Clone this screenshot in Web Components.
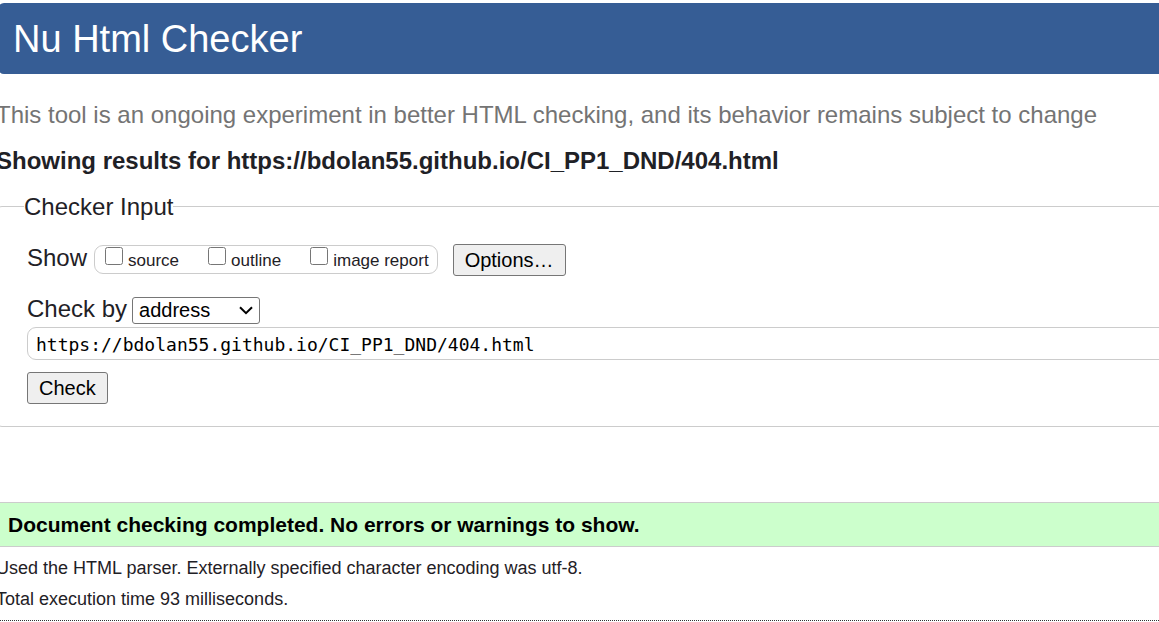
<!DOCTYPE html>
<html lang="en">
<head>
<meta charset="utf-8">
<title>Nu Html Checker</title>
<style>
body { margin: 0; overflow-x: hidden; background: #fff; color: #1f2126; font-family: "Liberation Sans", Arial, sans-serif; }
</style>
</head>
<body>
<checker-page>
  <checker-banner>Nu Html Checker</checker-banner>
  <checker-intro>
    This tool is an ongoing experiment in better HTML checking, and its behavior remains subject to change
    <span slot="results">Showing results for https://bdolan55.github.io/CI_PP1_DND/404.html</span>
  </checker-intro>
  <checker-form></checker-form>
  <checker-results>
    Document checking completed. No errors or warnings to show.
    <span slot="parser">Used the HTML parser. Externally specified character encoding was utf-8.</span>
    <span slot="time">Total execution time 93 milliseconds.</span>
  </checker-results>
</checker-page>

<script>
const define = (name, html) => customElements.define(name, class extends HTMLElement {
  constructor() {
    super();
    this.attachShadow({ mode: "open" }).innerHTML = html;
  }
});

define("checker-page", `
  <style>
    :host { display: flex; flex-direction: column; margin: 0 -40px 0 -4px; padding-top: 3px; }
  </style>
  <slot></slot>`);

define("checker-banner", `
  <style>
    :host { display: block; margin-left: 2px; background: #365d95; color: #fff; border-radius: 6px; padding: 14px 15px 13px; }
    h1 { margin: 0; font-size: 38px; line-height: 44px; font-weight: 400; }
  </style>
  <h1><slot></slot></h1>`);

define("checker-intro", `
  <style>
    :host { display: block; padding-top: 27px; }
    p { margin: 0; font-size: 24px; line-height: 28px; color: #747474; }
    h2 { margin: 18px 0 0; font-size: 24px; line-height: 28px; }
  </style>
  <p><slot></slot></p>
  <h2><slot name="results"></slot></h2>`);

define("check-option", `
  <style>
    :host { display: block; }
    label { display: flex; gap: 5px; font-size: 17px; line-height: 27px; }
    input { width: 18px; height: 18px; margin: 1px 0 0; }
    span { padding-top: 1px; }
  </style>
  <label><input type="checkbox"><span><slot></slot></span></label>`);

define("checker-form", `
  <style>
    :host { display: block; padding-top: 18px; }
    fieldset { margin: 0; border: 1px solid #ccc; border-radius: 6px; padding: 24px 30px 22px; min-width: 0; }
    legend { margin-left: -3px; padding: 0; font-size: 24px; line-height: 27px; }
    .row { display: flex; align-items: flex-start; font-size: 24px; line-height: 28px; }
    .options { display: flex; gap: 29px; box-sizing: border-box; height: 29px; margin: 1px 15px 0 7px; padding: 0 8px 0 10px; border: 1px solid #ccc; border-radius: 9px; }
    .by { gap: 5px; margin-top: 19px; }
    button { display: block; box-sizing: border-box; height: 32px; padding: 0 11px 1px; border: 1px solid #767676; border-radius: 3px; background: #efefef; color: #000; font: 20px/28px "Liberation Sans", Arial, sans-serif; }
    .select { display: grid; align-items: center; margin-top: 2px; }
    .select > * { grid-area: 1 / 1; }
    select { appearance: none; box-sizing: border-box; width: 128px; height: 27px; padding: 0 6px; border: 1px solid #767676; border-radius: 3px; background: #fff; color: #000; font: 20px/25px "Liberation Sans", Arial, sans-serif; }
    svg { justify-self: end; margin-right: 7px; pointer-events: none; }
    .url { display: block; box-sizing: border-box; width: 100%; height: 33px; margin: 3px 0 12px; padding: 1px 8px 0; border: 1px solid #ccc; border-radius: 9px; background: #fff; color: #000; font: 18px/30px "DejaVu Sans Mono", monospace; }
  </style>
  <fieldset>
    <legend>Checker Input</legend>
    <div class="row">
      <span>Show</span>
      <div class="options">
        <check-option>source</check-option>
        <check-option>outline</check-option>
        <check-option>image report</check-option>
      </div>
      <button type="button">Options…</button>
    </div>
    <div class="row by">
      <label for="method">Check by</label>
      <span class="select">
        <select id="method"><option>address</option></select>
        <svg width="14" height="9" viewBox="0 0 14 9" fill="none" stroke="#000" stroke-width="2"><path d="M1 1.2 7 7.2 13 1.2"/></svg>
      </span>
    </div>
    <input class="url" type="text" aria-label="Address" value="https://bdolan55.github.io/CI_PP1_DND/404.html" spellcheck="false">
    <button type="submit">Check</button>
  </fieldset>`);

define("checker-results", `
  <style>
    :host { display: block; padding-top: 75px; }
    .success { margin: 0; padding: 9px 11px; border: 1px solid #ccc; border-radius: 4px; background: #cfc; background-clip: padding-box; color: #000; font-size: 21px; line-height: 25px; font-weight: 700; }
    .details { padding: 6px 0 5px; border-bottom: 1px dotted #333; font-size: 18px; line-height: 31px; }
    .details p { margin: 0; }
  </style>
  <p class="success"><slot></slot></p>
  <div class="details">
    <p><slot name="parser"></slot></p>
    <p><slot name="time"></slot></p>
  </div>`);
</script>
</body>
</html>
